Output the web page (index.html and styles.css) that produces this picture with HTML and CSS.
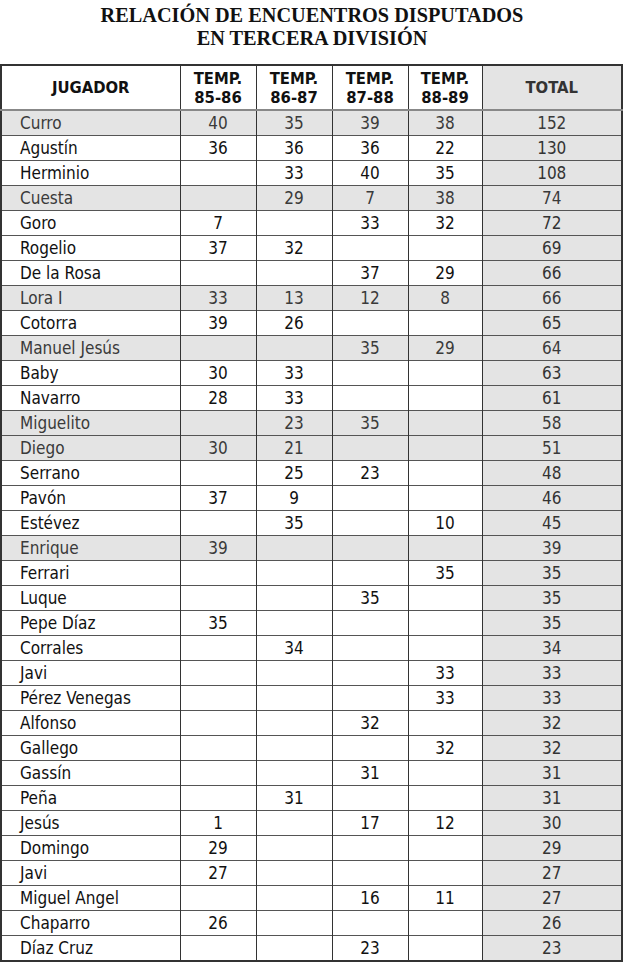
FILE: index.html
```html
<!DOCTYPE html>
<html lang="es">
<head>
<meta charset="utf-8">
<title>Relación de encuentros disputados</title>
<link rel="stylesheet" href="styles.css">
</head>
<body>
<h1 class="title">RELACIÓN DE ENCUENTROS DISPUTADOS<br>EN TERCERA DIVISIÓN</h1>
<table class="stats">
<colgroup>
<col class="c-name"><col class="c-t"><col class="c-t"><col class="c-t"><col class="c-t4"><col class="c-total">
</colgroup>
<thead>
<tr><th>JUGADOR</th><th>TEMP.<br>85-86</th><th>TEMP.<br>86-87</th><th>TEMP.<br>87-88</th><th>TEMP.<br>88-89</th><th class="total">TOTAL</th></tr>
</thead>
<tbody>
<tr class="sh"><td>Curro</td><td>40</td><td>35</td><td>39</td><td>38</td><td class="total">152</td></tr>
<tr><td>Agustín</td><td>36</td><td>36</td><td>36</td><td>22</td><td class="total">130</td></tr>
<tr><td>Herminio</td><td></td><td>33</td><td>40</td><td>35</td><td class="total">108</td></tr>
<tr class="sh"><td>Cuesta</td><td></td><td>29</td><td>7</td><td>38</td><td class="total">74</td></tr>
<tr><td>Goro</td><td>7</td><td></td><td>33</td><td>32</td><td class="total">72</td></tr>
<tr><td>Rogelio</td><td>37</td><td>32</td><td></td><td></td><td class="total">69</td></tr>
<tr><td>De la Rosa</td><td></td><td></td><td>37</td><td>29</td><td class="total">66</td></tr>
<tr class="sh"><td>Lora I</td><td>33</td><td>13</td><td>12</td><td>8</td><td class="total">66</td></tr>
<tr><td>Cotorra</td><td>39</td><td>26</td><td></td><td></td><td class="total">65</td></tr>
<tr class="sh"><td>Manuel Jesús</td><td></td><td></td><td>35</td><td>29</td><td class="total">64</td></tr>
<tr><td>Baby</td><td>30</td><td>33</td><td></td><td></td><td class="total">63</td></tr>
<tr><td>Navarro</td><td>28</td><td>33</td><td></td><td></td><td class="total">61</td></tr>
<tr class="sh"><td>Miguelito</td><td></td><td>23</td><td>35</td><td></td><td class="total">58</td></tr>
<tr class="sh"><td>Diego</td><td>30</td><td>21</td><td></td><td></td><td class="total">51</td></tr>
<tr><td>Serrano</td><td></td><td>25</td><td>23</td><td></td><td class="total">48</td></tr>
<tr><td>Pavón</td><td>37</td><td>9</td><td></td><td></td><td class="total">46</td></tr>
<tr><td>Estévez</td><td></td><td>35</td><td></td><td>10</td><td class="total">45</td></tr>
<tr class="sh"><td>Enrique</td><td>39</td><td></td><td></td><td></td><td class="total">39</td></tr>
<tr><td>Ferrari</td><td></td><td></td><td></td><td>35</td><td class="total">35</td></tr>
<tr><td>Luque</td><td></td><td></td><td>35</td><td></td><td class="total">35</td></tr>
<tr><td>Pepe Díaz</td><td>35</td><td></td><td></td><td></td><td class="total">35</td></tr>
<tr><td>Corrales</td><td></td><td>34</td><td></td><td></td><td class="total">34</td></tr>
<tr><td>Javi</td><td></td><td></td><td></td><td>33</td><td class="total">33</td></tr>
<tr><td>Pérez Venegas</td><td></td><td></td><td></td><td>33</td><td class="total">33</td></tr>
<tr><td>Alfonso</td><td></td><td></td><td>32</td><td></td><td class="total">32</td></tr>
<tr><td>Gallego</td><td></td><td></td><td></td><td>32</td><td class="total">32</td></tr>
<tr><td>Gassín</td><td></td><td></td><td>31</td><td></td><td class="total">31</td></tr>
<tr><td>Peña</td><td></td><td>31</td><td></td><td></td><td class="total">31</td></tr>
<tr><td>Jesús</td><td>1</td><td></td><td>17</td><td>12</td><td class="total">30</td></tr>
<tr><td>Domingo</td><td>29</td><td></td><td></td><td></td><td class="total">29</td></tr>
<tr><td>Javi</td><td>27</td><td></td><td></td><td></td><td class="total">27</td></tr>
<tr><td>Miguel Angel</td><td></td><td></td><td>16</td><td>11</td><td class="total">27</td></tr>
<tr><td>Chaparro</td><td>26</td><td></td><td></td><td></td><td class="total">26</td></tr>
<tr><td>Díaz Cruz</td><td></td><td></td><td>23</td><td></td><td class="total">23</td></tr>
</tbody>
</table>
</body>
</html>
```
FILE: styles.css
```css
html, body {
  margin: 0;
  padding: 0;
  background: #fff;
}
.title {
  margin: 4px 0 0 0;
  height: 60px;
  font-family: "Liberation Serif", "Times New Roman", serif;
  font-weight: bold;
  font-size: 20.3px;
  line-height: 23px;
  text-align: center;
  color: #111;
}
.stats {
  border-collapse: collapse;
  width: 623px;
  table-layout: fixed;
  font-family: "DejaVu Sans Condensed", "DejaVu Sans", sans-serif;
  font-stretch: condensed;
  color: #111;
  border: 2px solid #333;
}
.c-name { width: 179px; }
.c-t { width: 76px; }
.c-t4 { width: 74px; }
.c-total { width: auto; }
.stats th {
  height: 43px;
  padding: 0;
  font-size: 16.5px;
  line-height: 19px;
  font-weight: bold;
  text-align: center;
  border-left: 1px solid #333;
  border-bottom: 2px solid #888;
  color: #111;
}
.stats th:first-child { border-left: none; }
.stats td {
  height: 24px;
  padding: 0;
  font-size: 17px;
  line-height: 20px;
  text-align: center;
  border-left: 1px solid #333;
  border-top: 1px solid #555;
}
.stats td:first-child {
  text-align: left;
  padding-left: 18px;
  border-left: none;
}
.stats .total {
  background: #e4e4e4;
  color: #333;
}
.stats tr.sh td {
  background: #e4e4e4;
  color: #3a3a3a;
}
```
